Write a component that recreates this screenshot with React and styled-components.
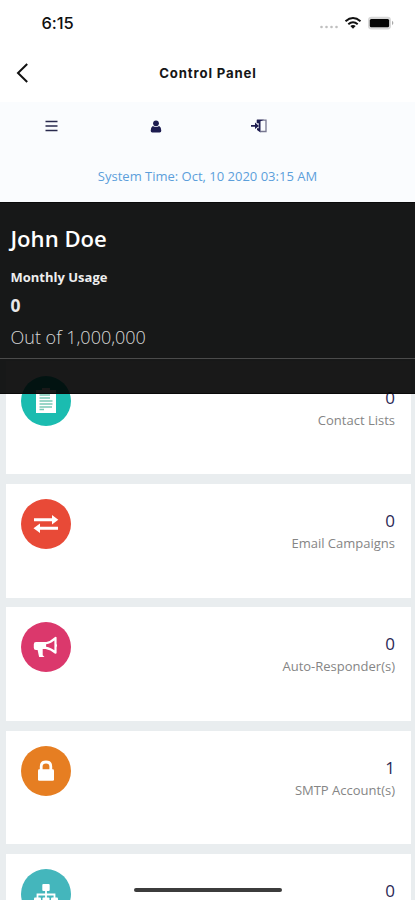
import React from "react";
import styled, { createGlobalStyle } from "styled-components";

const GlobalStyle = createGlobalStyle`
  * { box-sizing: border-box; }
  body { margin: 0; background: #e9edef; overflow: hidden; }
`;

const Screen = styled.div`
  position: relative;
  width: 415px;
  height: 900px;
  overflow: hidden;
  background: #e9edef;
  font-family: "Open Sans", "Noto Sans", sans-serif;
`;

const StatusBar = styled.header`
  display: flex;
  justify-content: space-between;
  align-items: center;
  height: 46px;
  padding: 0 20px 0 41.5px;
  background: #fff;
`;

const Clock = styled.span`
  font: 500 16.5px/20px Inter, sans-serif;
  letter-spacing: -0.1px;
  color: #111;
`;

const TitleBar = styled.nav`
  display: grid;
  grid-template-columns: 40px 1fr 40px;
  align-items: center;
  height: 56px;
  padding-bottom: 3px;
  background: #fff;
`;

const BackIcon = styled.svg`
  margin-left: 16px;
`;

const Title = styled.h1`
  margin: 0;
  padding-left: 1px;
  text-align: center;
  font: 700 13.2px/18px Inter, sans-serif;
  letter-spacing: 0.85px;
  color: #161616;
`;

const Toolbar = styled.section`
  height: 100px;
  background: #fafcfe;
`;

const Actions = styled.div`
  display: grid;
  grid-template-columns: repeat(4, 103.75px);
  justify-items: center;
  align-items: center;
  height: 48px;
`;

const SystemTime = styled.p`
  margin: 16px 0 0;
  text-align: center;
  font-size: 13px;
  line-height: 20px;
  color: #5c9fdb;
`;

const UsagePanel = styled.section`
  position: relative;
  z-index: 1;
  height: 192px;
  background: rgba(0, 0, 0, 0.9);
  border-top: 1px solid #0a0a0a;
  border-bottom: 1px solid #0a0a0a;
  color: #fff;
`;

const UsageDetails = styled.div`
  height: 156px;
  padding: 19px 10.5px 0;
  border-bottom: 1px solid #4b4b4b;
`;

const UserName = styled.h2`
  margin: 0;
  font-size: 22.1px;
  font-weight: 600;
  line-height: 32px;
`;

const UsageLabel = styled.div`
  margin-top: 13.5px;
  font-size: 13px;
  font-weight: 700;
  line-height: 18px;
  color: #eee;
`;

const UsageCount = styled.div`
  margin-top: 7px;
  font-size: 17.5px;
  font-weight: 700;
  line-height: 24px;
  color: #e8e8e8;
`;

const UsageLimit = styled.div`
  margin-top: 8.5px;
  font-size: 18px;
  font-weight: 300;
  line-height: 24px;
  color: #d8d8d8;
`;

const CardList = styled.main`
  display: grid;
  grid-auto-rows: 113.6px;
  gap: 9.7px;
  margin-top: -33.3px;
  padding: 0 4px 0 6px;
`;

const Card = styled.article`
  display: flex;
  justify-content: space-between;
  padding: 15px 16px 0 15px;
  background: #fff;
`;

const Badge = styled.div`
  display: grid;
  place-items: center;
  width: 50px;
  height: 50px;
  border-radius: 50%;
  background: ${({ $color }) => $color};
`;

const Stat = styled.div`
  padding-top: 14px;
  text-align: right;
`;

const StatValue = styled.div`
  font-size: 17px;
  line-height: 16px;
  color: #2b2856;
`;

const StatLabel = styled.div`
  margin-top: 4px;
  font-size: 13px;
  line-height: 20px;
  color: #858585;
`;

const HomeIndicator = styled.div`
  position: absolute;
  z-index: 2;
  left: 134px;
  bottom: 8px;
  width: 148px;
  height: 4px;
  border-radius: 2px;
  background: #3c3c3c;
`;

const StatusIcons = () => (
  <svg width="77" height="18" viewBox="0 0 77 18">
    <g fill="#bfbfbf">
      <circle cx="3.5" cy="13" r="1.3" /><circle cx="8.5" cy="13" r="1.3" />
      <circle cx="13.5" cy="13" r="1.3" /><circle cx="18.5" cy="13" r="1.3" />
    </g>
    <g fill="none" stroke="#111" strokeWidth="2">
      <path d="M27.5 7.2Q35 .8 42.5 7.2" />
      <path d="M30.3 10.2Q35 6.2 39.7 10.2" />
    </g>
    <path d="M32.3 12.1Q35 10 37.7 12.1L35 14.7Z" fill="#111" />
    <rect x="50" y="2.8" width="23" height="12.6" rx="3.4" fill="#d8d8d8" />
    <rect x="51.8" y="5" width="19.3" height="8.2" rx="1.5" fill="#050505" />
    <path d="M74 6.8Q76.8 9 74 11.3Z" fill="#aaa" />
  </svg>
);

const MenuIcon = () => (
  <svg width="13" height="12" viewBox="0 0 13 12">
    <path d="M.5 1.5h12M.5 6h12M.5 10.5h12" stroke="#28294d" strokeWidth="1.5" />
  </svg>
);

const UserIcon = () => (
  <svg width="12" height="13" viewBox="0 0 12 13" fill="#1d1c50">
    <circle cx="6" cy="3.3" r="2.9" />
    <path d="M2.8 6Q6 8.2 9.2 6Q11.3 7.3 11.3 10.8Q11.3 12.5 9.7 12.5H2.3Q.7 12.5.7 10.8Q.7 7.3 2.8 6Z" />
  </svg>
);

const ExitIcon = () => (
  <svg width="17" height="14" viewBox="0 0 17 14">
    <path d="M6.7 3.5V1.2H15V12.5H9.5" fill="none" stroke="#777790" strokeWidth="1.3" />
    <path d="M5.7.7H13L9.5 2.3V13.5L6 11V9.2H7.7V4.2H5.7Z" fill="#1d1c50" />
    <path d="M0 5.9H4V3.5L8 7L4 10.1V7.8H0Z" fill="#1d1c50" />
  </svg>
);

const ListIcon = () => (
  <svg width="22" height="26" viewBox="0 0 22 26">
    <path d="M1 2H7V0H15V2H21V25H1Z" fill="#fff" />
    <path d="M4.5 7H15M4.5 10H15M4.5 13H17.5M4.5 16H17.5M4.5 19H17M4.5 21.5H9" stroke="#79c9b6" strokeWidth="1.6" />
  </svg>
);

const ExchangeIcon = () => (
  <svg width="26" height="20" viewBox="0 0 26 20" fill="#fff">
    <path d="M1 4.2H19V1L25.3 5.7L19 10.4V7.3H1Z" />
    <path d="M25 12.7H7V9.5L.5 14.3L7 19V15.8H25Z" />
  </svg>
);

const MegaphoneIcon = () => (
  <svg width="26" height="22" viewBox="0 0 26 22">
    <path d="M3 6H13V13H9.7V19.2L11.5 21H6.1L4.6 14H3Q.8 14 .8 11.8V8.2Q.8 6 3 6Z" fill="#fff" />
    <path d="M12 7.5Q18.5 6 22.5 1.9V16.7Q18.5 12.8 12 11.6Z" fill="none" stroke="#fff" strokeWidth="2.2" strokeLinejoin="round" />
    <path d="M22.5 7.5Q25.6 9.3 22.5 11.5Z" fill="#fff" />
  </svg>
);

const LockIcon = () => (
  <svg width="18" height="22" viewBox="0 0 18 22">
    <path d="M4.2 10V6.4Q4.2 2 9 2T13.8 6.4V10" fill="none" stroke="#fff" strokeWidth="2.8" />
    <rect x="1" y="9.2" width="16" height="11.5" rx="1.3" fill="#fff" />
  </svg>
);

const SitemapIcon = () => (
  <svg width="26" height="22" viewBox="0 0 26 22">
    <path d="M13 6V17M4.5 17V11.5H21.5V17" fill="none" stroke="#fff" strokeWidth="1.8" />
    <g fill="#fff">
      <rect x="9.3" y="1" width="7.4" height="7" rx="1" />
      <rect x="1" y="14.5" width="7" height="6.5" rx="1" />
      <rect x="9.5" y="14.5" width="7" height="6.5" rx="1" />
      <rect x="18" y="14.5" width="7" height="6.5" rx="1" />
    </g>
  </svg>
);

const stats = [
  { label: "Contact Lists", value: 0, color: "#1bbcb0", Icon: ListIcon },
  { label: "Email Campaigns", value: 0, color: "#e84a37", Icon: ExchangeIcon },
  { label: "Auto-Responder(s)", value: 0, color: "#db386c", Icon: MegaphoneIcon },
  { label: "SMTP Account(s)", value: 1, color: "#e67e22", Icon: LockIcon },
  { label: "", value: 0, color: "#44b6bc", Icon: SitemapIcon },
];

export default function App() {
  return (
    <Screen>
      <GlobalStyle />
      <StatusBar>
        <Clock>6:15</Clock>
        <StatusIcons />
      </StatusBar>
      <TitleBar>
        <BackIcon width="13" height="20" viewBox="0 0 13 20">
          <path d="M11.2 1L2 10L11.2 19" fill="none" stroke="#111" strokeWidth="2" />
        </BackIcon>
        <Title>Control Panel</Title>
      </TitleBar>
      <Toolbar>
        <Actions>
          <MenuIcon />
          <UserIcon />
          <ExitIcon />
        </Actions>
        <SystemTime>System Time: Oct, 10 2020 03:15 AM</SystemTime>
      </Toolbar>
      <UsagePanel>
        <UsageDetails>
          <UserName>John Doe</UserName>
          <UsageLabel>Monthly Usage</UsageLabel>
          <UsageCount>0</UsageCount>
          <UsageLimit>Out of 1,000,000</UsageLimit>
        </UsageDetails>
      </UsagePanel>
      <CardList>
        {stats.map(({ label, value, color, Icon }, index) => (
          <Card key={index}>
            <Badge $color={color}><Icon /></Badge>
            <Stat>
              <StatValue>{value}</StatValue>
              {label && <StatLabel>{label}</StatLabel>}
            </Stat>
          </Card>
        ))}
      </CardList>
      <HomeIndicator />
    </Screen>
  );
}
